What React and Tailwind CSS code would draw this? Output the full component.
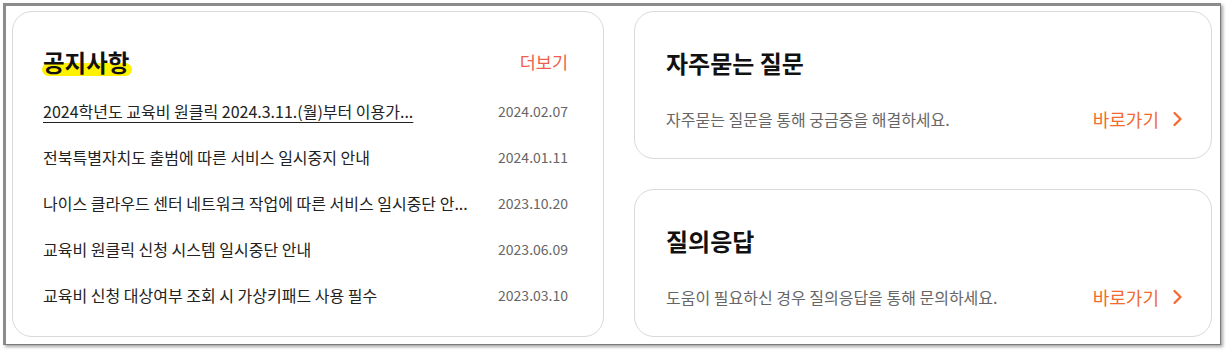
import React from "react";

const notices = [
  { title: "2024학년도 교육비 원클릭 2024.3.11.(월)부터 이용가...", date: "2024.02.07", active: true },
  { title: "전북특별자치도 출범에 따른 서비스 일시중지 안내", date: "2024.01.11" },
  { title: "나이스 클라우드 센터 네트워크 작업에 따른 서비스 일시중단 안...", date: "2023.10.20" },
  { title: "교육비 원클릭 신청 시스템 일시중단 안내", date: "2023.06.09" },
  { title: "교육비 신청 대상여부 조회 시 가상키패드 사용 필수", date: "2023.03.10" },
];

const links = [
  { title: "자주묻는 질문", desc: "자주묻는 질문을 통해 궁금증을 해결하세요." },
  { title: "질의응답", desc: "도움이 필요하신 경우 질의응답을 통해 문의하세요." },
];

function Chevron() {
  return (
    <svg width="11" height="16" viewBox="0 0 11 16" fill="none" className="shrink-0">
      <polyline points="2.5,2 8.5,8 2.5,14" stroke="#f26a2e" strokeWidth="2.3" strokeLinecap="round" strokeLinejoin="round" />
    </svg>
  );
}

export default function App() {
  return (
    <div
      className="w-[1227px] h-[351px] bg-white pt-[3px] pl-[3px]"
      style={{ fontFamily: '"Noto Sans CJK KR", "Noto Sans", sans-serif' }}
    >
      <div className="w-[1218px] h-[342px] border-t-[3px] border-l-[3px] border-r border-b border-t-[#8c8c8c] border-l-[#8c8c8c] border-r-[#7a7a7a] border-b-[#7a7a7a] shadow-[2px_2px_3px_rgba(0,0,0,0.35)] pt-[5px] pl-[6px]">
        <div className="flex gap-[30px]">
          {/* notices */}
          <section className="w-[592px] h-[326px] rounded-[20px] border border-[#d9d9d9] bg-white pt-[34px] pl-[30px] pr-[35px]">
            <div className="flex items-center justify-between h-[32px]">
              <h2 className="relative isolate text-[23.5px] leading-[32px] font-bold text-[#111]">
                <span className="absolute -left-[1px] -right-[3px] top-[17px] h-[13px] rounded-[7px] bg-[#fff200] -z-10" />
                공지사항
              </h2>
              <a className="text-[17.5px] leading-[32px] text-[#ef5f4c]">더보기</a>
            </div>
            <ul className="mt-[10px]">
              {notices.map((n) => (
                <li key={n.date} className="flex items-center justify-between h-[46px]">
                  <span
                    className={
                      n.active
                        ? "text-[16px] text-[#222] underline underline-offset-[4px] decoration-[1px]"
                        : "text-[16px] text-[#222]"
                    }
                  >
                    {n.title}
                  </span>
                  <span className="text-[14px] text-[#666]">{n.date}</span>
                </li>
              ))}
            </ul>
          </section>

          {/* shortcuts */}
          <div className="flex flex-col gap-[30px]">
            {links.map((l) => (
              <section
                key={l.title}
                className="w-[578px] h-[148px] rounded-[20px] border border-[#d9d9d9] bg-white pt-[35px] pl-[31px] pr-[28px]"
              >
                <h2 className="text-[24px] leading-[32px] font-bold text-[#111]">{l.title}</h2>
                <div className="mt-[28px] flex items-center justify-between h-[24px]">
                  <p className="text-[16px] text-[#666]">{l.desc}</p>
                  <a className="flex items-center gap-[13px] text-[18px] text-[#f26a2e]">
                    바로가기
                    <Chevron />
                  </a>
                </div>
              </section>
            ))}
          </div>
        </div>
      </div>
    </div>
  );
}
